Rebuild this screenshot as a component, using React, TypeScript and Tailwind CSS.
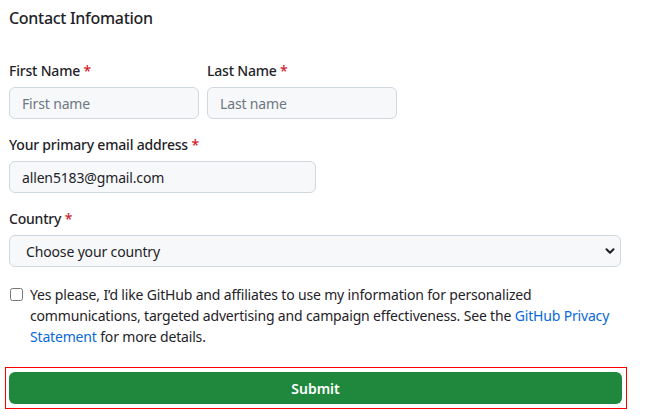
import { ChevronDown } from "lucide-react";

function Label({ text }: { text: string }) {
  return (
    <label className="block text-[14px] leading-[20px] font-medium tracking-[-0.2px] text-[#1f2328]">
      {text} <span className="text-[#cf222e]">*</span>
    </label>
  );
}

const inputCls =
  "mt-[6px] h-[32px] rounded-[6px] border border-[#d0d7de] bg-[#f6f8fa] px-[12px] text-[14px] tracking-[-0.15px] text-[#1f2328] placeholder:text-[#6e7781] outline-none";

export default function App() {
  return (
    <div
      className="w-[645px] h-[419px] bg-white px-[9px] pt-[6px]"
      style={{ fontFamily: '"Noto Sans", "Open Sans", sans-serif' }}
    >
      <h2 className="text-[16px] leading-[24px] font-medium tracking-[-0.3px] text-[#1f2328]">
        Contact Infomation
      </h2>

      <div className="mt-[31px] flex gap-[8px]">
        <div className="flex flex-col">
          <Label text="First Name" />
          <input className={`${inputCls} w-[190px]`} placeholder="First name" />
        </div>
        <div className="flex flex-col">
          <Label text="Last Name" />
          <input className={`${inputCls} w-[190px]`} placeholder="Last name" />
        </div>
      </div>

      <div className="mt-[16px] flex flex-col">
        <Label text="Your primary email address" />
        <input className={`${inputCls} w-[307px]`} defaultValue="allen5183@gmail.com" />
      </div>

      <div className="mt-[16px] flex flex-col">
        <Label text="Country" />
        <div className="relative mt-[6px] w-[612px]">
          <select className="h-[32px] w-full appearance-none rounded-[6px] border border-[#d0d7de] bg-[#f6f8fa] pl-[16px] text-[14px] tracking-[-0.15px] text-[#1f2328] outline-none">
            <option>Choose your country</option>
          </select>
          <ChevronDown
            className="pointer-events-none absolute right-[4px] top-[9px] text-[#1f2328]"
            size={14}
            strokeWidth={3.5}
          />
        </div>
      </div>

      <div className="mt-[17px] flex items-start gap-[7px] pr-[18px]">
        <input
          type="checkbox"
          className="mt-[4px] ml-[1px] h-[13px] w-[13px] shrink-0"
        />
        <p className="text-[14px] leading-[21px] tracking-[-0.17px] text-[#1f2328]">
          Yes please, I’d like GitHub and affiliates to use my information for personalized
          communications, targeted advertising and campaign effectiveness. See the{" "}
          <a className="text-[#0969da]" href="#">
            GitHub Privacy
          </a>{" "}
          <a className="text-[#0969da]" href="#">
            Statement
          </a>{" "}
          for more details.
        </p>
      </div>

      <div className="mt-[20px] -ml-[4px] w-[622px] border border-[#ff0000] py-[4px] pl-[3px] pr-[4px]">
        <button className="h-[32px] w-full rounded-[6px] bg-[#1f883d] text-[14px] font-semibold text-white">
          Submit
        </button>
      </div>
    </div>
  );
}
